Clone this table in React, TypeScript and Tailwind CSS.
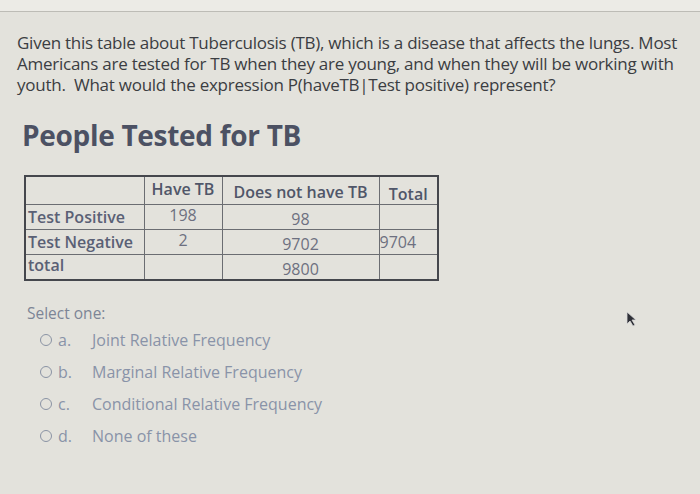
import React from "react";

const options = [
  { letter: "a.", text: "Joint Relative Frequency" },
  { letter: "b.", text: "Marginal Relative Frequency" },
  { letter: "c.", text: "Conditional Relative Frequency" },
  { letter: "d.", text: "None of these" },
];

const App = () => {
  return (
    <div
      className="w-[700px] h-[494px] overflow-hidden bg-[#e3e2dc] text-[#3b3d42] relative"
      style={{ fontFamily: '"Open Sans", "Noto Sans", sans-serif' }}
    >
      {/* top strip */}
      <div className="h-[12px] bg-[#ecebe6] border-b border-[#bdbcb6]" />

      {/* question */}
      <p className="pl-[17px] pr-[10px] pt-[20px] text-[17px] leading-[21px] tracking-[-0.25px]">
        Given this table about Tuberculosis (TB), which is a disease that affects the lungs. Most
        Americans are tested for TB when they are young, and when they will be working with
        youth.&nbsp; What would the expression P(haveTB|Test positive) represent?
      </p>

      <h2 className="pl-[22px] mt-[22px] text-[28px] font-bold text-[#4c5163] leading-[36px] tracking-[-0.3px]">
        People Tested for TB
      </h2>

      {/* table */}
      <table className="ml-[24px] mt-[22px] border-collapse border-2 border-[#45474d] text-[16px] leading-[20px]">
        <tbody>
          <tr className="h-[28px]">
            <td className="w-[119px] border border-[#6b6d72]"></td>
            <td className="w-[78px] border border-[#6b6d72] text-center font-semibold text-[#505669] align-top pt-[2px]">Have TB</td>
            <td className="w-[157px] border border-[#6b6d72] text-center font-semibold text-[#505669] pt-[3px]">Does not have TB</td>
            <td className="w-[59px] border border-[#6b6d72] text-center font-semibold text-[#505669] align-bottom">Total</td>
          </tr>
          <tr className="h-[25px]">
            <td className="border border-[#6b6d72] font-semibold text-[#5a6075] px-[2px]">Test Positive</td>
            <td className="border border-[#6b6d72] text-center text-[#6d7080] align-top">198</td>
            <td className="border border-[#6b6d72] text-center text-[#6d7080] align-bottom">98</td>
            <td className="border border-[#6b6d72]"></td>
          </tr>
          <tr className="h-[25px]">
            <td className="border border-[#6b6d72] font-semibold text-[#5a6075] px-[2px]">Test Negative</td>
            <td className="border border-[#6b6d72] text-center text-[#6d7080] align-top">2</td>
            <td className="border border-[#6b6d72] text-center text-[#6d7080] align-bottom">9702</td>
            <td className="border border-[#6b6d72] text-[#6d7080]">9704</td>
          </tr>
          <tr className="h-[26px]">
            <td className="border border-[#6b6d72] font-semibold text-[#5a6075] px-[2px] align-top">total</td>
            <td className="border border-[#6b6d72]"></td>
            <td className="border border-[#6b6d72] text-center text-[#6d7080] align-bottom">9800</td>
            <td className="border border-[#6b6d72]"></td>
          </tr>
        </tbody>
      </table>

      {/* answers */}
      <div className="pl-[27px] mt-[22px] text-[#7d8596]">
        <div className="text-[15.5px] leading-[20px]">Select one:</div>
        <div className="flex flex-col gap-[12px] mt-[7px]">
          {options.map((o) => (
            <div key={o.letter} className="flex items-center h-[20px] text-[16px] text-[#8993a8]">
              <span className="w-[12px] h-[12px] rounded-full border-[1.5px] border-[#8a93a4] ml-[13px]" />
              <span className="ml-[6px] w-[34px]">{o.letter}</span>
              <span>{o.text}</span>
            </div>
          ))}
        </div>
      </div>

      {/* mouse cursor */}
      <svg className="absolute left-[624px] top-[311px]" width="14" height="16" viewBox="0 0 14 16">
        <path d="M3 1 L3 13 L6 10 L9 15 L11 14 L8 9 L12 9 Z" fill="#2f3037" stroke="#d8d8d8" strokeWidth="0.8" />
      </svg>
    </div>
  );
};

export default App;
